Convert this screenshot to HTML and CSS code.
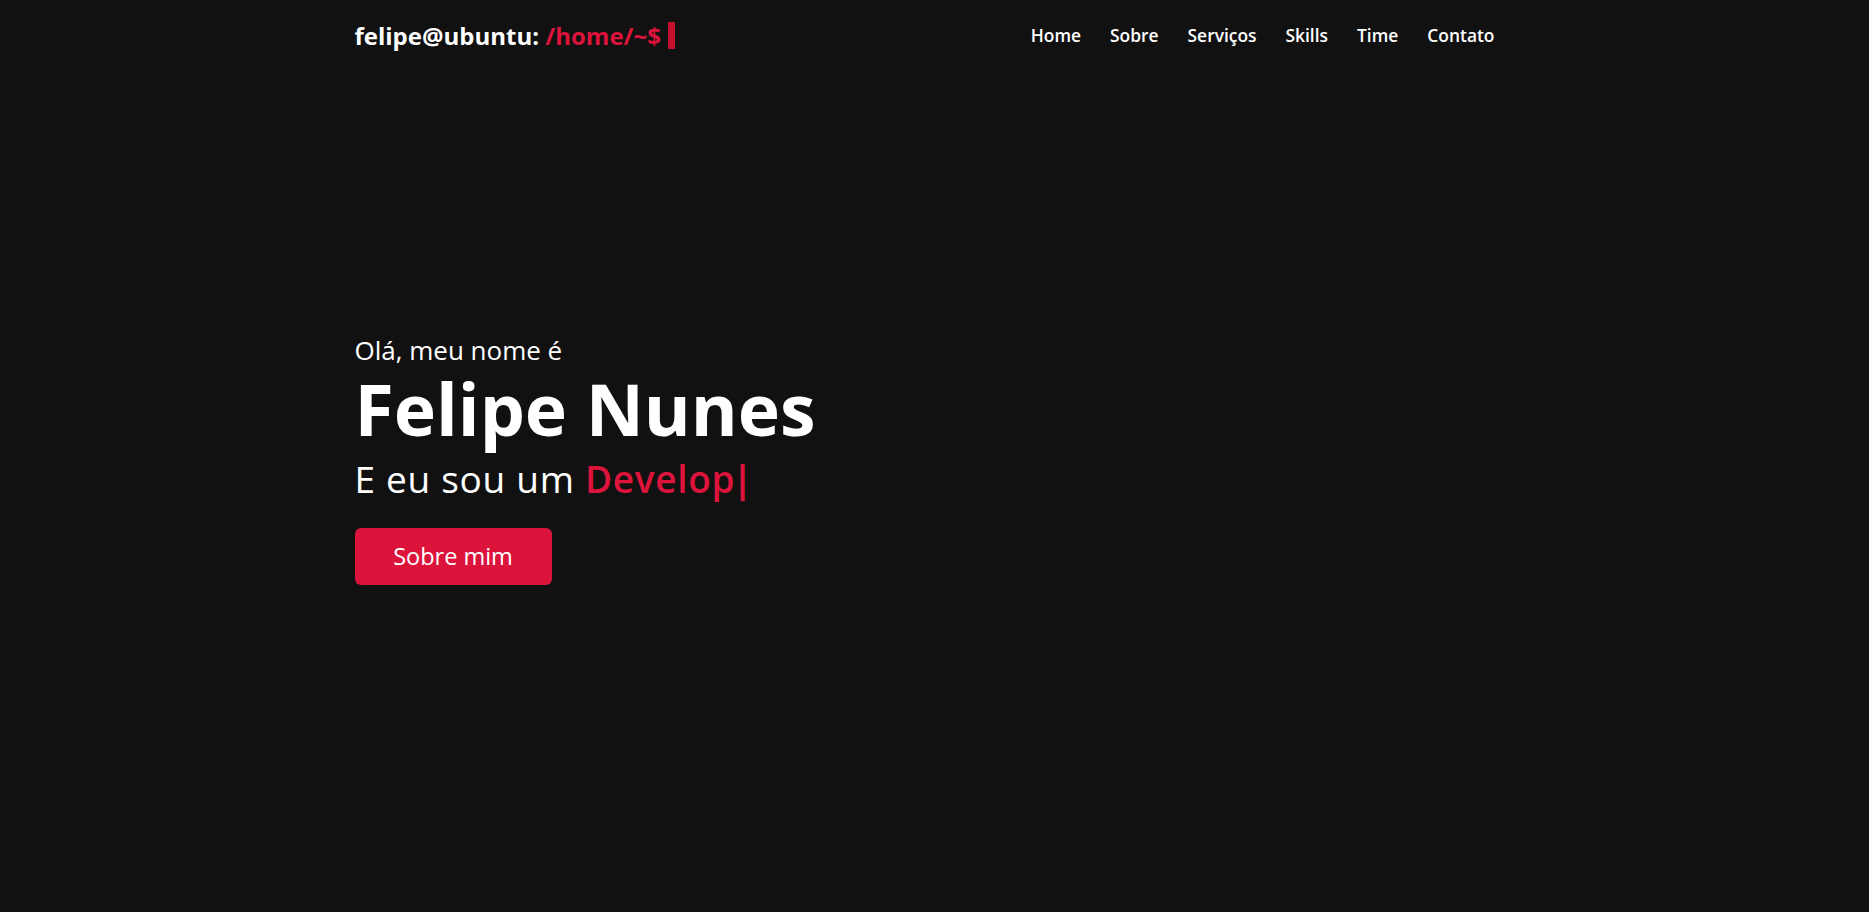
FILE: index.html
```html
<!DOCTYPE html>
<html lang="pt-BR">
<head>
<meta charset="utf-8">
<title>Felipe Nunes</title>
<link rel="stylesheet" href="styles.css">
</head>
<body>
<header class="navbar">
  <div class="container nav-inner">
    <a class="logo" href="#">felipe@ubuntu: <span class="path">/home/~$</span><span class="cursor"></span></a>
    <ul class="menu">
      <li><a href="#">Home</a></li>
      <li><a href="#">Sobre</a></li>
      <li><a href="#">Serviços</a></li>
      <li><a href="#">Skills</a></li>
      <li><a href="#">Time</a></li>
      <li><a href="#">Contato</a></li>
    </ul>
  </div>
</header>
<section class="home">
  <div class="container home-content">
    <p class="text-1">Olá, meu nome é</p>
    <h1 class="text-2">Felipe Nunes</h1>
    <p class="text-3">E eu sou um <span class="typing">Develop</span><span class="typed-cursor">|</span></p>
    <a class="btn" href="#">Sobre mim</a>
  </div>
</section>
</body>
</html>
```
FILE: styles.css
```css
* { box-sizing: border-box; margin: 0; padding: 0; }
html, body { height: 100%; }
body {
  background: #111111;
  color: #ffffff;
  font-family: "Open Sans", "Noto Sans", sans-serif;
  overflow: hidden;
}
a { text-decoration: none; color: inherit; }
.container {
  width: 1160px;
  margin: 0 auto;
}
.navbar { height: 70px; }
.nav-inner {
  height: 100%;
  display: flex;
  align-items: center;
  justify-content: space-between;
  padding-right: 20px;
}
.logo {
  display: flex;
  align-items: center;
  font-size: 24px;
  font-weight: 700;
  color: #fff;
  white-space: pre;
}
.path { color: #dc143c; }
.cursor {
  display: inline-block;
  width: 7px;
  height: 27px;
  background: #c3102f;
  margin-left: 7px;
}
.menu {
  list-style: none;
  display: flex;
  gap: 29px;
}
.menu a {
  font-size: 17.4px;
  font-weight: 600;
  color: #fff;
}
.home {
  height: calc(100% - 70px);
  display: flex;
  align-items: center;
  padding-bottom: 62px;
}
.home-content { display: flex; flex-direction: column; align-items: flex-start; }
.text-1 { font-size: 26px; line-height: 30px; }
.text-2 { font-size: 71.5px; font-weight: 700; line-height: 80px; margin-top: 4px; }
.text-3 { font-size: 37px; line-height: 44px; letter-spacing: 0.7px; margin-top: 8px; }
.typing { color: #dc143c; font-weight: 600; }
.typed-cursor { color: #dc143c; font-weight: 700; margin-left: -3px; }
.btn {
  margin-top: 27px;
  width: 197px;
  height: 57px;
  line-height: 57px;
  text-align: center;
  background: #dc143c;
  border-radius: 6px;
  font-size: 23.5px;
  color: #fff;
}
```
